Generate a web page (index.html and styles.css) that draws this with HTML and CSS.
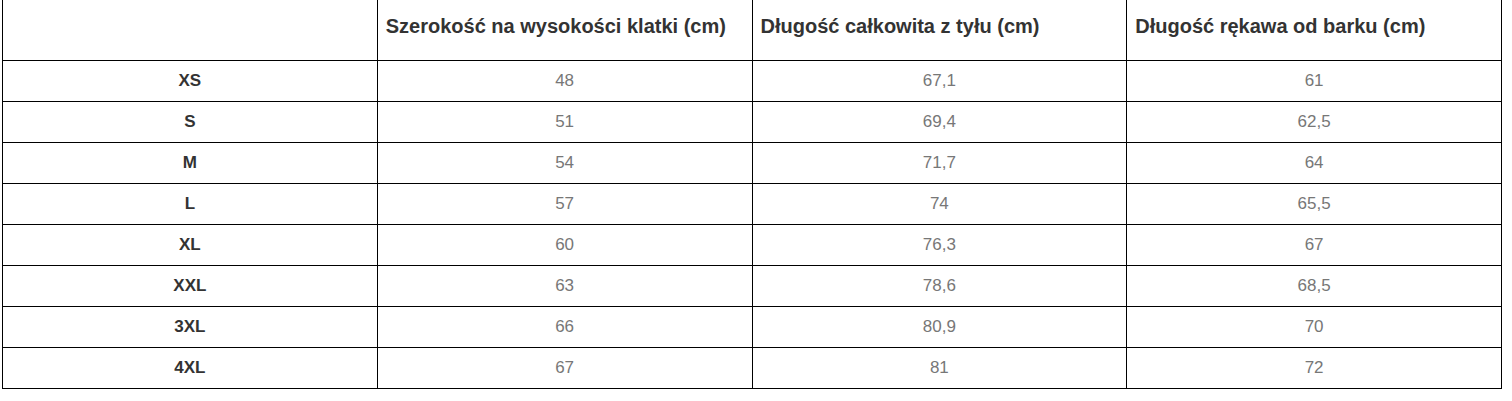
FILE: index.html
```html
<!DOCTYPE html>
<html lang="pl">
<head>
<meta charset="utf-8">
<title>Tabela rozmiarów</title>
<link rel="stylesheet" href="styles.css">
</head>
<body>
<table class="size-table">
  <thead>
    <tr>
      <th class="corner"></th>
      <th>Szerokość na wysokości klatki (cm)</th>
      <th>Długość całkowita z tyłu (cm)</th>
      <th>Długość rękawa od barku (cm)</th>
    </tr>
  </thead>
  <tbody>
    <tr><th class="size">XS</th><td>48</td><td>67,1</td><td>61</td></tr>
    <tr><th class="size">S</th><td>51</td><td>69,4</td><td>62,5</td></tr>
    <tr><th class="size">M</th><td>54</td><td>71,7</td><td>64</td></tr>
    <tr><th class="size">L</th><td>57</td><td>74</td><td>65,5</td></tr>
    <tr><th class="size">XL</th><td>60</td><td>76,3</td><td>67</td></tr>
    <tr><th class="size">XXL</th><td>63</td><td>78,6</td><td>68,5</td></tr>
    <tr><th class="size">3XL</th><td>66</td><td>80,9</td><td>70</td></tr>
    <tr><th class="size">4XL</th><td>67</td><td>81</td><td>72</td></tr>
  </tbody>
</table>
</body>
</html>
```

FILE: styles.css
```css
html, body {
  margin: 0;
  padding: 0;
  background: #ffffff;
}

body {
  font-family: "Liberation Sans", Arial, sans-serif;
}

.size-table {
  margin: -8px 0 0 2px;
  width: 1500px;
  table-layout: fixed;
  border-collapse: collapse;
}

.size-table th,
.size-table td {
  border: 1px solid #000000;
  padding: 0 8px;
}

.size-table thead th {
  height: 67px;
  font-size: 20px;
  font-weight: bold;
  color: #333333;
  text-align: left;
  vertical-align: middle;
}

.size-table tbody tr {
  height: 41px;
}

.size-table tbody th.size {
  font-size: 17px;
  font-weight: bold;
  color: #333333;
  text-align: center;
}

.size-table tbody td {
  font-size: 17px;
  color: #777777;
  text-align: center;
}
```
